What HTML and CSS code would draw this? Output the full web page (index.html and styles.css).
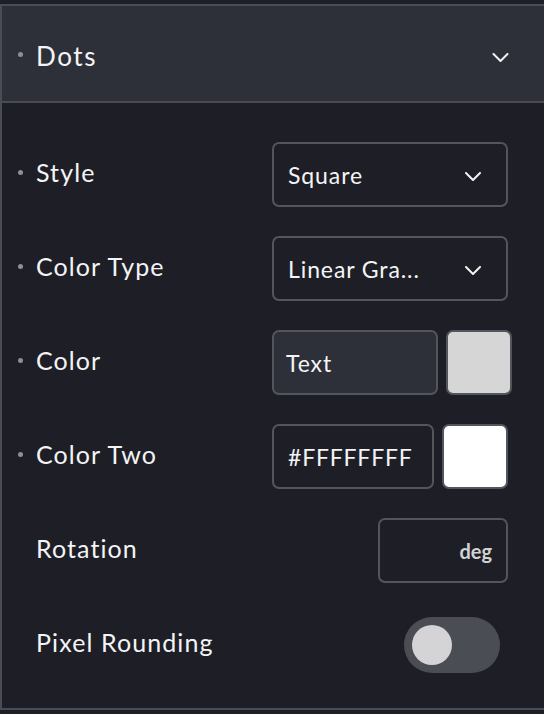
FILE: index.html
```html
<!DOCTYPE html>
<html>
<head>
<meta charset="utf-8">
<link rel="stylesheet" href="styles.css">
</head>
<body>
<div class="panel">
  <div class="header">
    <span class="bullet"></span>
    <span class="title">Dots</span>
    <svg class="chev head-chev" viewBox="0 0 16 9" width="17" height="9"><path d="M1 1 L8 8 L15 1" fill="none" stroke="#f2f2f2" stroke-width="2" stroke-linecap="round" stroke-linejoin="round"/></svg>
  </div>
  <div class="body">
    <div class="row">
      <div class="label"><span class="bullet"></span>Style</div>
      <div class="select"><span class="value">Square</span><svg class="chev sel-chev" viewBox="0 0 16 9" width="16" height="9"><path d="M1 1 L8 8 L15 1" fill="none" stroke="#f2f2f2" stroke-width="2" stroke-linecap="round" stroke-linejoin="round"/></svg></div>
    </div>
    <div class="row">
      <div class="label"><span class="bullet"></span>Color Type</div>
      <div class="select"><span class="value">Linear Gra...</span><svg class="chev sel-chev" viewBox="0 0 16 9" width="16" height="9"><path d="M1 1 L8 8 L15 1" fill="none" stroke="#f2f2f2" stroke-width="2" stroke-linecap="round" stroke-linejoin="round"/></svg></div>
    </div>
    <div class="row row-c1">
      <div class="label"><span class="bullet"></span>Color</div>
      <div class="color-group">
        <div class="text-input filled">Text</div>
        <div class="swatch grey"></div>
      </div>
    </div>
    <div class="row">
      <div class="label"><span class="bullet"></span>Color Two</div>
      <div class="color-group">
        <div class="text-input hex">#FFFFFFFF</div>
        <div class="swatch white"></div>
      </div>
    </div>
    <div class="row">
      <div class="label plain">Rotation</div>
      <div class="deg-input"><span>deg</span></div>
    </div>
    <div class="row row-toggle">
      <div class="label plain">Pixel Rounding</div>
      <div class="toggle"><span class="knob"></span></div>
    </div>
  </div>
</div>
</body>
</html>
```

FILE: styles.css
```css
html, body {
  margin: 0;
  padding: 0;
  background: #1e1f26;
  height: 714px;
  overflow: hidden;
}
body {
  font-family: "Lato", "Open Sans", sans-serif;
  color: #f4f4f6;
}
.panel {
  margin-top: 4px;
  border-top: 2px solid #4a4c53;
  border-left: 2px solid #4a4c53;
  border-bottom: 2px solid #4a4c53;
}
.header {
  height: 97px;
  background: #2d3038;
  border-bottom: 2px solid #4a4c53;
  display: flex;
  align-items: center;
  padding: 0 35px 0 16px;
  box-sizing: border-box;
}
.bullet {
  width: 5px;
  height: 5px;
  border-radius: 50%;
  background: #8e9097;
  display: inline-block;
  margin-right: 13px;
  margin-top: 2px;
  flex: none;
}
.title {
  font-size: 26px;
  letter-spacing: 1.6px;
  flex: 1;
  padding-top: 4px;
}
.head-chev {
  margin-top: 8px;
}
.body {
  padding: 39px 36px 31px 16px;
  display: flex;
  flex-direction: column;
  gap: 29px;
}
.row {
  display: flex;
  align-items: center;
  justify-content: space-between;
  height: 65px;
}
.label {
  display: flex;
  align-items: center;
  font-size: 25px;
  letter-spacing: 1.1px;
  padding-bottom: 6px;
}
.label.plain {
  padding-left: 18px;
}
.select {
  width: 236px;
  height: 65px;
  box-sizing: border-box;
  border: 2px solid #53555c;
  border-radius: 7px;
  display: flex;
  align-items: center;
  justify-content: space-between;
  padding: 0 25px 0 14px;
  font-size: 23px;
  letter-spacing: 0.9px;
}
.sel-chev {
  margin-top: 4px;
}
.color-group {
  display: flex;
  gap: 8px;
}
.row-c1 {
  margin-right: -4px;
}
.text-input {
  height: 65px;
  box-sizing: border-box;
  border: 2px solid #53555c;
  border-radius: 7px;
  display: flex;
  align-items: center;
  font-size: 23px;
  letter-spacing: 0.9px;
}
.text-input.filled {
  width: 166px;
  background: #2d3038;
  padding-left: 12px;
}
.text-input.hex {
  width: 162px;
  padding-left: 14px;
  letter-spacing: 0.8px;
}
.swatch {
  width: 66px;
  height: 65px;
  box-sizing: border-box;
  border: 2px solid #53555c;
  border-radius: 7px;
}
.swatch.grey { background: #d6d6d6; }
.swatch.white { background: #ffffff; }
.deg-input {
  width: 130px;
  height: 65px;
  box-sizing: border-box;
  border: 2px solid #53555c;
  border-radius: 7px;
  display: flex;
  align-items: center;
  justify-content: flex-end;
  padding-right: 14px;
  font-size: 20px;
  font-weight: 700;
  color: #d2d2d4;
}
.row-toggle {
  padding-right: 8px;
}
.toggle {
  width: 96px;
  height: 56px;
  border-radius: 28px;
  background: #4b4d55;
  display: flex;
  align-items: center;
  padding-left: 8px;
  box-sizing: border-box;
}
.knob {
  width: 40px;
  height: 40px;
  border-radius: 50%;
  background: #d4d4d6;
}
```
